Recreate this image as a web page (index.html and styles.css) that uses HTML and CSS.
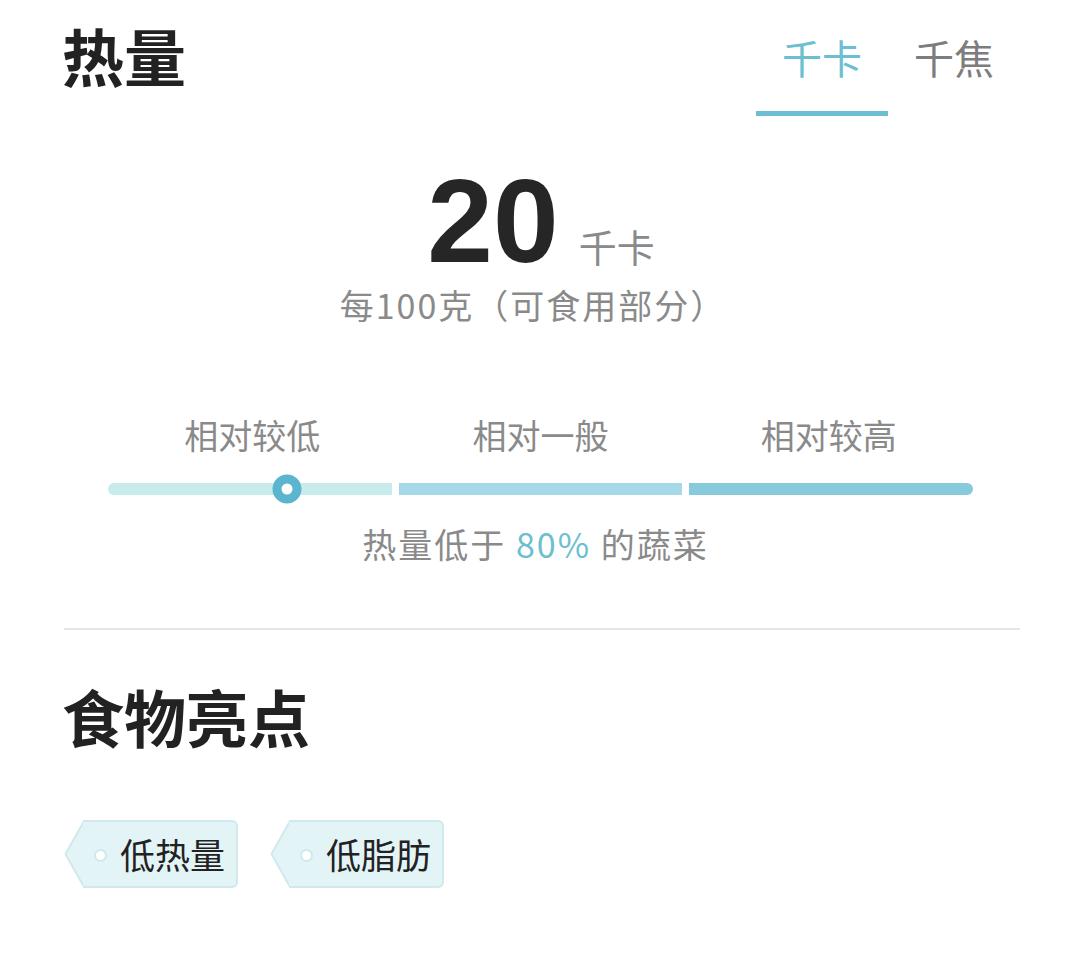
FILE: index.html
```html
<!DOCTYPE html>
<html lang="zh-CN">
<head>
  <meta charset="UTF-8" />
  <title>热量</title>
  <link rel="stylesheet" href="styles.css">
</head>
<body>

  <div class="header">
    <h2 class="title">热量</h2>
    <div class="tabs">
      <div class="tab active">千卡</div>
      <div class="tab">千焦</div>
    </div>
  </div>

  <div class="energy">
    <div class="energy-value">
      <span class="number">20</span>
      <span class="unit">千卡</span>
    </div>
    <div class="energy-note">每100克（可食用部分）</div>
  </div>

  <div class="scale">
    <div class="scale-labels">
      <span>相对较低</span>
      <span>相对一般</span>
      <span>相对较高</span>
    </div>
    <div class="scale-bar">
      <div class="seg seg-low">
        <span class="knob" style="left: 63%;"></span>
      </div>
      <div class="seg seg-mid"></div>
      <div class="seg seg-high"></div>
    </div>
    <div class="scale-note">热量低于 <span class="hl">80%</span> 的蔬菜</div>
  </div>

  <hr class="divider" />

  <h2 class="title">食物亮点</h2>

  <div class="tags">
    <div class="tag">
      <svg class="tag-point" width="20" height="68" viewBox="0 0 20 68">
        <polygon points="20,1 1.5,34 20,67" fill="#e3f4f6" />
        <polyline points="20,1 1.5,34 20,67" fill="none" stroke="#cfe9ed" stroke-width="2" stroke-linejoin="round" />
      </svg>
      <div class="tag-body"><span class="tag-hole"></span>低热量</div>
    </div>
    <div class="tag">
      <svg class="tag-point" width="20" height="68" viewBox="0 0 20 68">
        <polygon points="20,1 1.5,34 20,67" fill="#e3f4f6" />
        <polyline points="20,1 1.5,34 20,67" fill="none" stroke="#cfe9ed" stroke-width="2" stroke-linejoin="round" />
      </svg>
      <div class="tag-body"><span class="tag-hole"></span>低脂肪</div>
    </div>
  </div>

</body>
</html>
```

FILE: styles.css
```css
body {
  font-family: "Noto Sans CJK SC", "Noto Sans", sans-serif;
  margin: 0;
  padding: 0 60px 0 62px;
  background-color: #ffffff;
  color: #222222;
}

.header {
  display: flex;
  justify-content: space-between;
  align-items: flex-start;
  height: 122px;
}

.title {
  margin: 0;
  font-size: 62px;
  font-weight: 700;
  line-height: 1;
  color: #222222;
}

.header .title {
  padding-top: 24px;
}

.tabs {
  display: flex;
  padding-top: 32px;
}

.tab {
  width: 132px;
  height: 84px;
  font-size: 40px;
  line-height: 50px;
  text-align: center;
  color: #7d7d7d;
  box-sizing: border-box;
}

.tab.active {
  color: #6cbfd1;
  border-bottom: 5px solid #6cbfd1;
}

.energy {
  text-align: center;
  padding-top: 40px;
}

.energy-value {
  display: flex;
  justify-content: center;
  align-items: baseline;
  gap: 20px;
  height: 118px;
}

.number {
  font-family: "Liberation Sans", Arial, sans-serif;
  font-size: 118px;
  font-weight: 700;
  line-height: 118px;
  color: #262626;
}

.unit {
  font-size: 38px;
  color: #8a8a8a;
}

.energy-note {
  font-size: 34px;
  letter-spacing: 2px;
  color: #8a8a8a;
  line-height: 44px;
  margin-top: 3px;
  margin-right: 16px;
}

.scale {
  padding: 86px 47px 0 46px;
}

.scale-labels {
  display: grid;
  grid-template-columns: repeat(3, 1fr);
  text-align: center;
  font-size: 34px;
  line-height: 44px;
  color: #8a8a8a;
}

.scale-bar {
  display: flex;
  gap: 7px;
  margin-top: 26px;
  height: 12px;
}

.seg {
  flex: 1;
  position: relative;
}

.seg-low {
  background-color: #c8ebeb;
  border-radius: 6px 0 0 6px;
}

.seg-mid {
  background-color: #a6d9e8;
}

.seg-high {
  background-color: #87cadc;
  border-radius: 0 6px 6px 0;
}

.knob {
  position: absolute;
  top: 50%;
  width: 11px;
  height: 11px;
  border: 9px solid #5bb5cf;
  border-radius: 50%;
  background-color: #ffffff;
  transform: translate(-50%, -50%);
}

.scale-note {
  margin-top: 27px;
  text-align: center;
  font-size: 34px;
  letter-spacing: 2px;
  line-height: 44px;
  color: #8a8a8a;
  margin-right: 10px;
}

.hl {
  color: #6cbfd1;
}

.divider {
  border: none;
  border-top: 2px solid #e6e6e6;
  margin: 62px 0 55px 2px;
}

.tags {
  display: flex;
  gap: 32px;
  margin-top: 73px;
  padding-left: 2px;
}

.tag {
  display: flex;
  height: 68px;
}

.tag-point {
  display: block;
  flex-shrink: 0;
  margin-right: -1px;
}

.tag-body {
  position: relative;
  height: 68px;
  padding: 0 11px 0 37px;
  font-size: 35px;
  line-height: 64px;
  color: #222222;
  background-color: #e3f4f6;
  border: 2px solid #cfe9ed;
  border-left: none;
  border-radius: 0 6px 6px 0;
  box-sizing: border-box;
}

.tag-hole {
  position: absolute;
  left: 11px;
  top: 27px;
  width: 9px;
  height: 9px;
  border-radius: 50%;
  background-color: #ffffff;
  border: 2px solid #d0e8ec;
}
```
